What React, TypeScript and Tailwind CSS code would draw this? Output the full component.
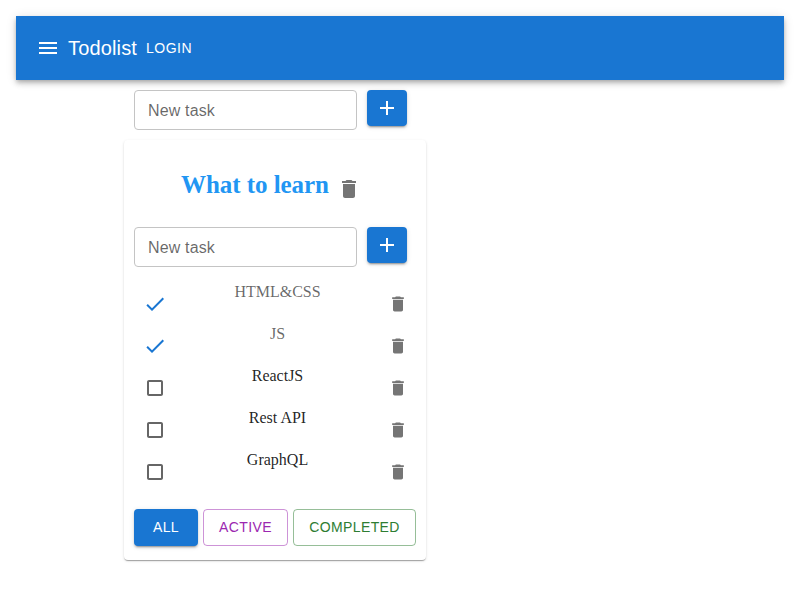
import React from "react";

const paths = {
  menu: "M3 18h18v-2H3v2zm0-5h18v-2H3v2zm0-7v2h18V6H3z",
  add: "M19 13h-6v6h-2v-6H5v-2h6V5h2v6h6v2z",
  trash: "M6 19c0 1.1.9 2 2 2h8c1.1 0 2-.9 2-2V7H6v12zM19 4h-3.5l-1-1h-5l-1 1H5v2h14V4z",
  done: "M9 16.2 4.8 12l-1.4 1.4L9 19 21 7l-1.4-1.4L9 16.2z",
  square:
    "M18 4H6c-1.1 0-2 .9-2 2v12c0 1.1.9 2 2 2h12c1.1 0 2-.9 2-2V6c0-1.1-.9-2-2-2zm0 14H6V6h12v12z",
};

function Icon({ name, className }: { name: keyof typeof paths; className: string }) {
  return (
    <svg viewBox="0 0 24 24" fill="currentColor" aria-hidden="true" className={className}>
      <path d={paths[name]} />
    </svg>
  );
}

function AddItemForm() {
  return (
    <div className="flex items-start gap-2.5">
      <input
        placeholder="New task"
        className="h-10 w-[223px] rounded border border-[#c4c4c4] bg-white px-[13px] pt-0.5 text-base tracking-[0.15px] text-black outline-none placeholder:text-black/60"
      />
      <button
        aria-label="Add"
        className="flex h-9 w-10 items-center justify-center rounded bg-[#1976d2] text-white shadow-[0px_3px_1px_-2px_rgba(0,0,0,0.2),0px_2px_2px_0px_rgba(0,0,0,0.14),0px_1px_5px_0px_rgba(0,0,0,0.12)]"
      >
        <Icon name="add" className="size-6" />
      </button>
    </div>
  );
}

const tasks = [
  { title: "HTML&CSS", done: true },
  { title: "JS", done: true },
  { title: "ReactJS", done: false },
  { title: "Rest API", done: false },
  { title: "GraphQL", done: false },
];

function TaskRow({ title, done }: { title: string; done: boolean }) {
  return (
    <li className={"flex h-[42px] justify-between " + (done ? "text-black/60" : "text-black/87")}>
      <button
        role="checkbox"
        aria-checked={done}
        aria-label={title}
        className={"flex size-[42px] items-center justify-center " + (done ? "text-[#1976d2]" : "text-[#666666]")}
      >
        <Icon name={done ? "done" : "square"} className="size-6" />
      </button>
      <span className="pr-px font-['Liberation_Serif',serif] text-base leading-[18px]">{title}</span>
      <button aria-label="Delete task" className="flex h-[42px] w-9 items-center justify-center text-[#757575]">
        <Icon name="trash" className="size-5" />
      </button>
    </li>
  );
}

const filterBase = "h-[37px] rounded pb-0.5 text-sm leading-6 tracking-[0.4px]";

export default function App() {
  return (
    <div className="h-[600px] overflow-hidden bg-white p-4 font-['Liberation_Sans',Arial,sans-serif]">
      <header className="flex h-16 items-center bg-[#1976d2] pl-5 text-white shadow-[0px_2px_4px_-1px_rgba(0,0,0,0.2),0px_4px_5px_0px_rgba(0,0,0,0.14),0px_1px_10px_0px_rgba(0,0,0,0.12)]">
        <Icon name="menu" className="size-6" />
        <h1 className="ml-2 text-xl tracking-[0.15px]">Todolist</h1>
        <button className="ml-[9px] text-sm tracking-[0.5px]">LOGIN</button>
      </header>
      <main className="ml-[108px] w-[302px] pt-2.5">
        <div className="pl-2.5">
          <AddItemForm />
        </div>
        <section className="mt-2.5 h-[420px] rounded bg-white px-2.5 shadow-[0px_2px_1px_-1px_rgba(0,0,0,0.2),0px_1px_1px_0px_rgba(0,0,0,0.14),0px_1px_3px_0px_rgba(0,0,0,0.12)]">
          <div className="flex h-[87px] items-start pl-[47px] pt-[31px]">
            <h2 className="w-[148px] whitespace-nowrap font-['Liberation_Serif',serif] text-[25px] font-bold leading-7 tracking-[-0.05px] text-[#2196f3]">
              What to learn
            </h2>
            <button aria-label="Delete list" className="ml-2 mt-1.5 text-[#757575]">
              <Icon name="trash" className="size-6" />
            </button>
          </div>
          <AddItemForm />
          <ul className="mt-4">
            {tasks.map((task) => (
              <TaskRow key={task.title} {...task} />
            ))}
          </ul>
          <div className="mt-4 flex gap-[5px]">
            <button
              className={
                filterBase +
                " w-16 bg-[#1976d2] text-white shadow-[0px_3px_1px_-2px_rgba(0,0,0,0.2),0px_2px_2px_0px_rgba(0,0,0,0.14),0px_1px_5px_0px_rgba(0,0,0,0.12)]"
              }
            >
              ALL
            </button>
            <button className={filterBase + " w-[85px] border border-[#9c27b0]/50 text-[#9c27b0]"}>ACTIVE</button>
            <button className={filterBase + " w-[123px] border border-[#2e7d32]/50 text-[#2e7d32]"}>COMPLETED</button>
          </div>
        </section>
      </main>
    </div>
  );
}
